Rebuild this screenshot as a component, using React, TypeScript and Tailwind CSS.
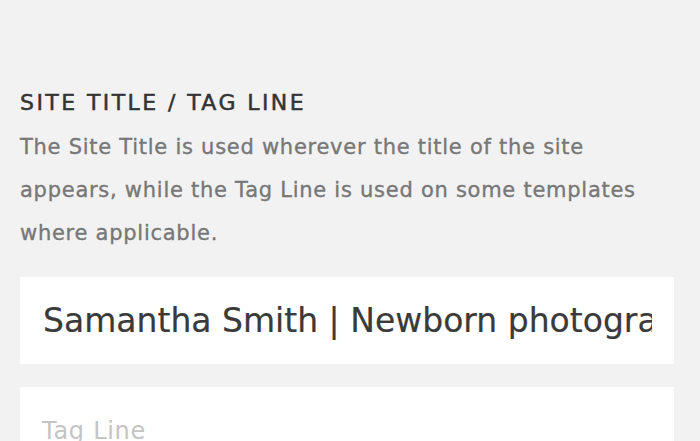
import React from "react";

const FONT = '"DejaVu Sans", "Liberation Sans", sans-serif';

export default function App() {
  return (
    <div
      className="w-[700px] h-[441px] overflow-hidden bg-[#f2f2f2] pl-5 pr-[26px] pt-[89px]"
      style={{ fontFamily: FONT }}
    >
      <h2 className="text-[22px] leading-[28px] font-normal uppercase text-[#333333] tracking-[0.11em] whitespace-nowrap [-webkit-text-stroke:0.5px_#333333]">
        Site Title / Tag Line
      </h2>
      <p className="mt-[9px] w-[650px] text-[21px] leading-[43px] text-[#777777] tracking-[0.035em] [-webkit-text-stroke:0.35px_#777777]">
        The Site Title is used wherever the title of the site appears, while the Tag Line is used on some templates where applicable.
      </p>
      <div className="mt-[22px] flex flex-col gap-[23px]">
        <input
          readOnly
          value="Samantha Smith | Newborn photographer"
          className="h-[87px] w-full bg-white pl-[23px] pr-[22px] text-[33px] text-[#3a3a3a] outline-none [-webkit-text-stroke:0.2px_#3a3a3a]"
          style={{ fontFamily: FONT }}
        />
        <input
          readOnly
          placeholder="Tag Line"
          className="h-[87px] w-full bg-white pl-[22px] pr-[22px] text-[24px] tracking-[0.03em] text-[#3a3a3a] placeholder:text-[#c4c4c4] outline-none"
          style={{ fontFamily: FONT }}
        />
      </div>
    </div>
  );
}
